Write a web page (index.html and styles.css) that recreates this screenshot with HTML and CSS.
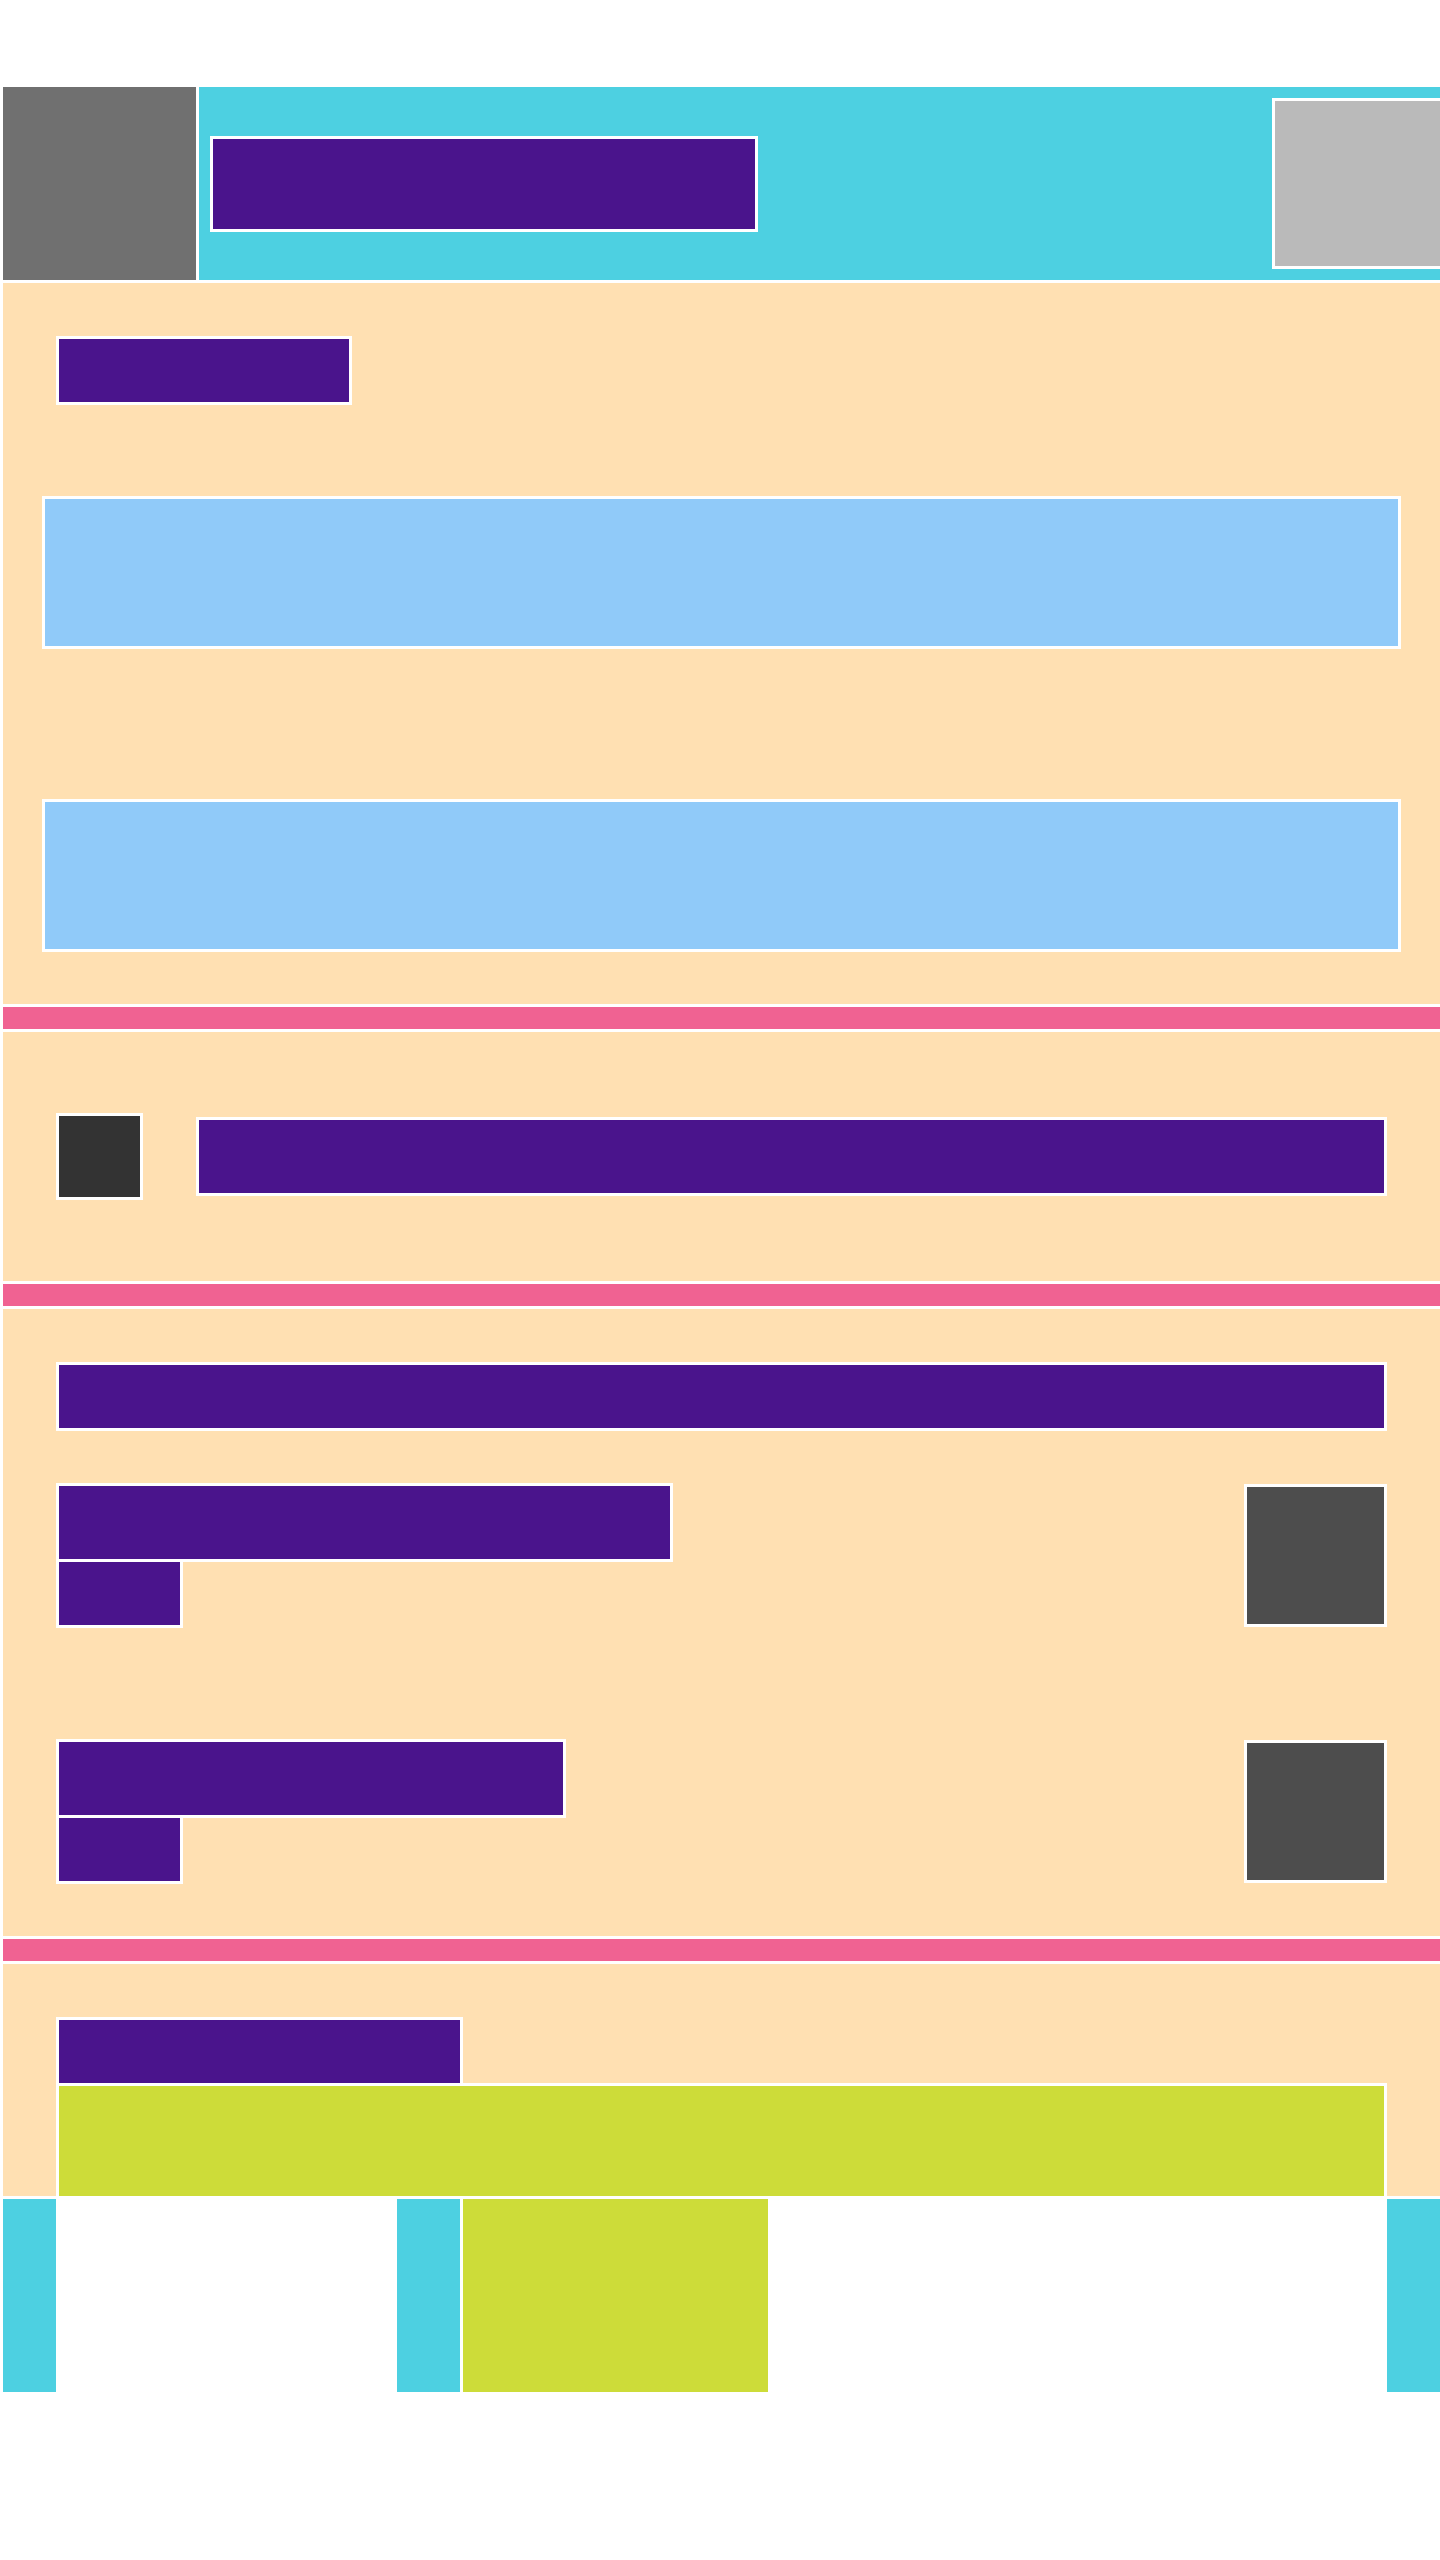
FILE: index.html
```html
<!DOCTYPE html>
<html lang="en">
<head>
<meta charset="utf-8">
<title>Layout</title>
<link rel="stylesheet" href="styles.css">
</head>
<body>
<div class="page">
  <header class="header">
    <div class="logo"></div>
    <div class="topbar">
      <div class="box purple header-title"></div>
      <div class="box lightgray avatar"></div>
    </div>
  </header>

  <section class="section s1">
    <div class="box purple s1-title"></div>
    <div class="box blue card card-1"></div>
    <div class="box blue card card-2"></div>
  </section>

  <div class="divider"></div>

  <section class="section s2">
    <div class="box dark thumb"></div>
    <div class="box purple s2-bar"></div>
  </section>

  <div class="divider"></div>

  <section class="section s3">
    <div class="box purple s3-bar"></div>
    <div class="row row-1">
      <div class="row-text">
        <div class="box purple row-title rt-1"></div>
        <div class="box purple row-sub"></div>
      </div>
      <div class="box darkgray row-thumb"></div>
    </div>
    <div class="row row-2">
      <div class="row-text">
        <div class="box purple row-title rt-2"></div>
        <div class="box purple row-sub"></div>
      </div>
      <div class="box darkgray row-thumb"></div>
    </div>
  </section>

  <div class="divider"></div>

  <section class="section s4">
    <div class="box purple s4-title"></div>
    <div class="box lime s4-panel"></div>
  </section>

  <footer class="footer">
    <div class="f-cyan f-left"></div>
    <div class="f-cyan f-mid"></div>
    <div class="f-lime"></div>
    <div class="f-cyan f-right"></div>
  </footer>
</div>
</body>
</html>
```

FILE: styles.css
```css
html {
  overflow-x: hidden;
}

body {
  margin: 0;
  background: #ffffff;
  font-family: "Liberation Sans", Arial, sans-serif;
}

.page {
  width: 1443px;
  box-sizing: border-box;
  padding: 87px 3px 0;
  display: flex;
  flex-direction: column;
  gap: 3px;
  background: #ffffff;
}

.box {
  box-sizing: border-box;
  border: 3px solid #ffffff;
  flex-shrink: 0;
}

.purple { background: #4a148c; }
.blue { background: #90caf9; }
.dark { background: #333333; }
.darkgray { background: #4d4d4d; }
.lightgray { background: #bababa; }
.lime { background: #cddc39; }

/* Header */
.header {
  display: flex;
  gap: 3px;
  height: 193px;
}

.logo {
  width: 193px;
  flex-shrink: 0;
  background: #707070;
}

.topbar {
  flex: 1;
  background: #4dd0e1;
  display: flex;
  align-items: center;
  justify-content: space-between;
  padding-left: 11px;
}

.header-title {
  width: 548px;
  height: 96px;
}

.avatar {
  width: 171px;
  height: 171px;
  margin-right: -3px;
}

/* Sections */
.section {
  background: #ffe0b2;
  box-sizing: border-box;
}

.divider {
  height: 22px;
  background: #f06292;
}

.s1 {
  height: 721px;
  padding: 53px 0 0;
  display: flex;
  flex-direction: column;
}

.s1-title {
  width: 296px;
  height: 69px;
  margin-left: 53px;
  margin-bottom: 91px;
}

.card {
  height: 153px;
  margin: 0 39px;
}

.card-1 {
  margin-bottom: 150px;
}

.s2 {
  height: 249px;
  display: flex;
  align-items: center;
  padding: 0 53px;
}

.thumb {
  width: 87px;
  height: 87px;
}

.s2-bar {
  flex: 1;
  height: 79px;
  margin-left: 53px;
}

.s3 {
  height: 627px;
  padding: 53px 53px 0;
  display: flex;
  flex-direction: column;
}

.s3-bar {
  height: 69px;
  margin-bottom: 52px;
}

.row {
  height: 145px;
  display: flex;
  align-items: center;
  justify-content: space-between;
}

.row-1 {
  margin-bottom: 111px;
}

.row-text {
  display: flex;
  flex-direction: column;
  align-self: flex-start;
}

.row-title {
  height: 79px;
}

.rt-1 { width: 617px; }
.rt-2 { width: 510px; }

.row-sub {
  width: 127px;
  height: 69px;
  margin-top: -3px;
}

.row-thumb {
  width: 143px;
  height: 143px;
}

.s4 {
  height: 232px;
  padding: 53px 53px 0;
  display: flex;
  flex-direction: column;
}

.s4-title {
  width: 407px;
  height: 69px;
}

.s4-panel {
  height: 116px;
  margin-top: -3px;
  margin-bottom: -3px;
  position: relative;
  z-index: 1;
}

/* Footer */
.footer {
  height: 193px;
  display: flex;
  background: #ffffff;
}

.f-cyan {
  background: #4dd0e1;
  flex-shrink: 0;
}

.f-left { width: 53px; }

.f-mid {
  width: 63px;
  margin-left: 341px;
}

.f-lime {
  width: 305px;
  margin-left: 3px;
  background: #cddc39;
}

.f-right {
  width: 53px;
  margin-left: auto;
}
```
